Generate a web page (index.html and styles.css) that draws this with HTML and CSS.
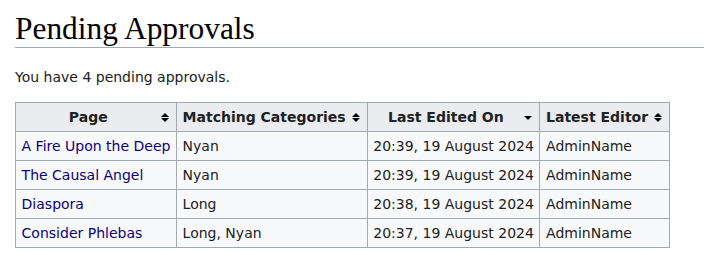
FILE: index.html
```html
<!DOCTYPE html>
<html>
<head>
<meta charset="utf-8">
<link rel="stylesheet" href="styles.css">
</head>
<body>
<div class="content">
  <h1 class="page-title">Pending Approvals</h1>
  <p class="intro">You have 4 pending approvals.</p>
  <table class="wikitable">
    <thead>
      <tr>
        <th class="sortable col-page">Page<span class="sort both"></span></th>
        <th class="sortable">Matching Categories<span class="sort both"></span></th>
        <th class="sortable col-date">Last Edited On<span class="sort down"></span></th>
        <th class="sortable">Latest Editor<span class="sort both"></span></th>
      </tr>
    </thead>
    <tbody>
      <tr><td><a href="#">A Fire Upon the Deep</a></td><td>Nyan</td><td>20:39, 19 August 2024</td><td>AdminName</td></tr>
      <tr><td><a href="#">The Causal Angel</a></td><td>Nyan</td><td>20:39, 19 August 2024</td><td>AdminName</td></tr>
      <tr><td><a href="#">Diaspora</a></td><td>Long</td><td>20:38, 19 August 2024</td><td>AdminName</td></tr>
      <tr><td><a href="#">Consider Phlebas</a></td><td>Long, Nyan</td><td>20:37, 19 August 2024</td><td>AdminName</td></tr>
    </tbody>
  </table>
</div>
</body>
</html>
```
FILE: styles.css
```css
html, body {
  margin: 0;
  padding: 0;
  background: #ffffff;
}
body {
  font-family: "DejaVu Sans", sans-serif;
  font-size: 14px;
  color: #202122;
}
.content {
  padding: 10px 0 0 15px;
}
.page-title {
  font-family: "Liberation Serif", "DejaVu Serif", serif;
  font-weight: normal;
  font-size: 31.4px;
  line-height: 37px;
  margin: 0;
  padding: 0;
  border-bottom: 1px solid #a2a9b1;
  color: #000;
}
.intro {
  margin: 18px 0 14px 0;
  line-height: 22px;
}
.wikitable {
  border-collapse: collapse;
  background: #f8f9fa;
  border: 1px solid #a2a9b1;
  color: #202122;
}
.wikitable th, .wikitable td {
  border: 1px solid #a2a9b1;
  padding: 0.2em 0.4em;
  line-height: 1.6;
}
.wikitable th {
  background: #eaecf0;
  font-weight: bold;
  text-align: center;
}
.wikitable th.sortable {
  position: relative;
  padding-right: 21px;
}
.sort {
  position: absolute;
  right: 7px;
  top: 50%;
  width: 8px;
  height: 9px;
  margin-top: -4px;
}
.sort.both::before, .sort.both::after, .sort.down::after {
  content: "";
  position: absolute;
  left: 0;
  width: 0;
  height: 0;
  border-left: 4px solid transparent;
  border-right: 4px solid transparent;
}
.sort.both::before {
  top: 0;
  border-bottom: 4px solid #000;
}
.sort.both::after {
  top: 5px;
  border-top: 4px solid #000;
}
.sort.down::after {
  top: 3px;
  border-top: 4px solid #000;
}
.col-page { min-width: 127px; }
.col-date { min-width: 138px; }
a {
  color: #0b0080;
  text-decoration: none;
}
```
